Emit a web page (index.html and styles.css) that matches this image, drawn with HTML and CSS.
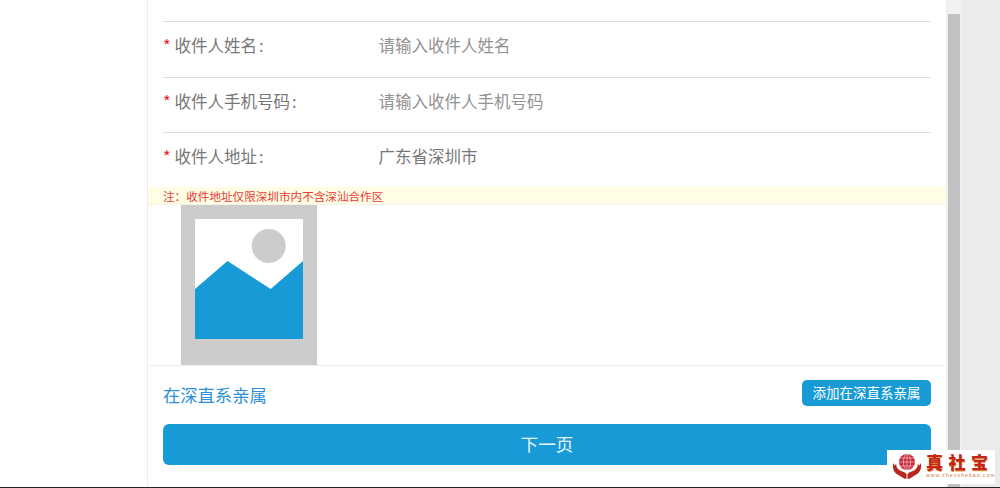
FILE: index.html
```html
<!DOCTYPE html>
<html lang="zh">
<head>
<meta charset="utf-8">
<title>收件人信息</title>
<link rel="stylesheet" href="styles.css">
</head>
<body>
<div class="shell">
  <div class="gutter"></div>
  <main class="panel">
    <div class="form">
      <div class="row"><span class="label"><i class="req">*</i>收件人姓名<span class="colon">:</span></span><span class="value hint">请输入收件人姓名</span></div>
      <div class="row"><span class="label"><i class="req">*</i>收件人手机号码<span class="colon">:</span></span><span class="value hint">请输入收件人手机号码</span></div>
      <div class="row"><span class="label"><i class="req">*</i>收件人地址<span class="colon">:</span></span><span class="value">广东省深圳市</span></div>
    </div>
    <div class="notice">注&#xFF1A;收件地址仅限深圳市内不含深汕合作区</div>
    <div class="photo">
      <svg class="placeholder" width="136" height="160" viewBox="0 0 136 160" aria-hidden="true">
        <rect width="136" height="160" fill="#cccccc"/>
        <rect x="14" y="14" width="108" height="120" fill="#ffffff"/>
        <circle cx="87.7" cy="41" r="17" fill="#cccccc"/>
        <polygon points="14,84 46.5,56 89.7,84 122,56 122,134 14,134" fill="#189ad6"/>
      </svg>
    </div>
    <div class="family">
      <span class="family-title">在深直系亲属</span>
      <button class="add">添加在深直系亲属</button>
    </div>
    <button class="next">下一页</button>
  </main>
  <div class="track"><div class="thumb"></div></div>
  <div class="side"></div>
  <div class="logo">
    <svg class="logo-mark" width="30" height="30" viewBox="0 0 30 30" aria-hidden="true">
      <circle cx="15" cy="10" r="8" fill="#c8283c"/>
      <g fill="none" stroke="#f3c6c6" stroke-width="0.7">
        <ellipse cx="15" cy="10" rx="3.6" ry="8"/>
        <path d="M15 2V18M7 10H23M8.2 6H21.8M8.2 14H21.8"/>
      </g>
      <path d="M1.2 11C0 17 2.5 21 6.5 23L12.5 26.8H14.5V22C12.5 19.5 9.5 19.5 7.5 18.2C5 16.6 4 14 4.2 11.5L2.8 13.8Z" fill="#b8261c"/>
      <path d="M28.8 11C30 17 27.5 21 23.5 23L17.5 26.8H15.5V22C17.5 19.5 20.5 19.5 22.5 18.2C25 16.6 26 14 25.8 11.5L27.2 13.8Z" fill="#b8261c"/>
    </svg>
    <div class="logo-text">
      <span class="logo-name">真社宝</span>
      <span class="logo-url">www.zhenshebao.com</span>
    </div>
  </div>
</div>
<div class="baseline"></div>
</body>
</html>
```
FILE: styles.css
```css
* { box-sizing: border-box; }
html, body { margin: 0; padding: 0; height: 488px; overflow: hidden; }
body {
  display: flex;
  flex-direction: column;
  background: #fff;
  font-family: "Noto Sans CJK SC", "Liberation Sans", sans-serif;
}
.shell { position: relative; flex: 1; display: flex; min-height: 0; }
.gutter { width: 147px; flex: none; }
.panel {
  width: 799px;
  flex: none;
  border-left: 1px solid #ececec;
  display: flex;
  flex-direction: column;
}
.form { padding: 21px 15px 0; }
.row {
  height: 55px;
  border-top: 1px solid #dedede;
  display: flex;
  align-items: flex-start;
  padding-top: 11px;
  font-size: 16.5px;
  line-height: 24px;
  color: #777;
}
.row:first-child { height: 56px; }
.label { width: 215.5px; flex: none; }
.req { font-style: normal; color: #e22; display: inline-block; width: 11.5px; }
.colon { margin-left: 2px; }
.value { color: #777; }
.hint { color: #929292; }
.notice {
  height: 18px;
  padding: 1px 0 0 15px;
  background: #fffde5;
  border-bottom: 1px solid #f5f3e2;
  color: #ea3a32;
  font-size: 11.6px;
  line-height: 17px;
}
.photo {
  height: 161px;
  padding-left: 33px;
  border-bottom: 1px solid #eeeeee;
}
.placeholder { display: block; }
.family {
  display: flex;
  justify-content: space-between;
  align-items: flex-start;
  padding: 14px 15px 0;
  height: 58px;
}
.family-title { color: #2d8fd8; font-size: 17.3px; line-height: 30px; }
.add {
  width: 129px;
  height: 26px;
  border: 0;
  border-radius: 5px;
  padding: 0 0 1px;
  background: #189ad6;
  color: #fff;
  font: 13.5px/25px "Noto Sans CJK SC", sans-serif;
}
.next {
  width: 768px;
  height: 41px;
  margin-left: 15px;
  border: 0;
  border-radius: 6px;
  padding: 0 0 2px;
  background: #189ad6;
  color: #e9f6fc;
  font: 17.6px/39px "Noto Sans CJK SC", sans-serif;
}
.track {
  width: 16px;
  flex: none;
  padding: 14px 2px 0;
  background: #f1f1f1;
}
.thumb { height: 100%; background: #c1c1c1; }
.side { flex: 1; background: #eaebed; }
.baseline { height: 1px; flex: none; background: #222; }
.logo {
  position: absolute;
  left: 887px;
  top: 450px;
  width: 108px;
  height: 34px;
  background: #fff;
  display: flex;
  align-items: flex-start;
  padding: 2px 0 0 5px;
  gap: 4px;
}
.logo-mark { flex: none; }
.logo-text { display: flex; flex-direction: column; }
.logo-name {
  font-weight: 900;
  font-size: 17px;
  line-height: 20px;
  letter-spacing: 5.5px;
  color: #c4261d;
  text-shadow: 0.5px 0.5px 0 #e8a24a;
  white-space: nowrap;
}
.logo-url {
  font-family: "Liberation Sans", sans-serif;
  font-size: 5px;
  line-height: 7px;
  letter-spacing: 1.1px;
  color: #d07a3a;
  white-space: nowrap;
}
```
